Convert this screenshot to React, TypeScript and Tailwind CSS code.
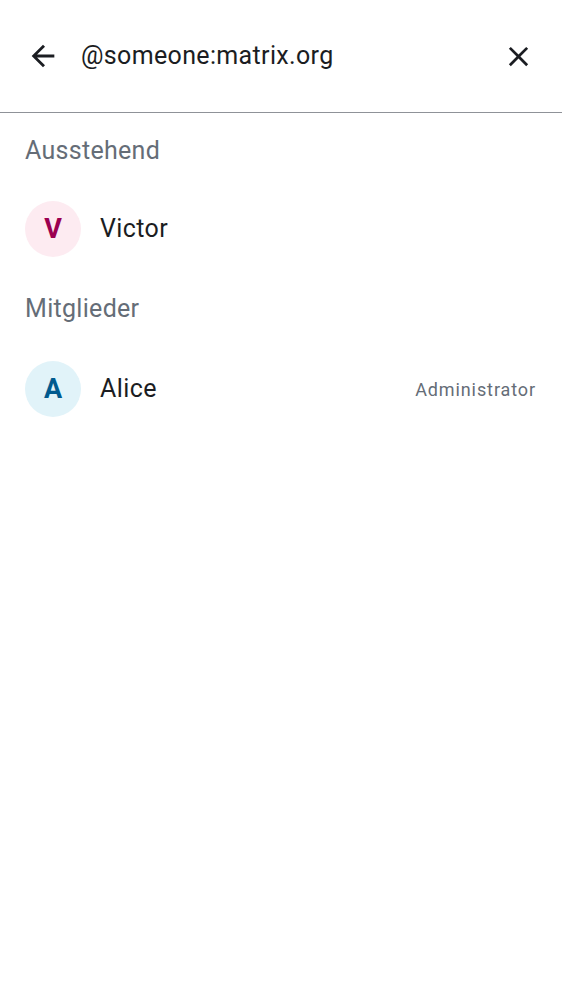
import React from "react";

function ArrowBack() {
  return (
    <svg width="34" height="34" viewBox="0 0 24 24" fill="#1b1d22">
      <path d="M20 11H7.83l5.59-5.59L12 4l-8 8 8 8 1.41-1.41L7.83 13H20v-2z" />
    </svg>
  );
}

function CloseIcon() {
  return (
    <svg width="33" height="33" viewBox="0 0 24 24" fill="#1b1d22">
      <path d="M19 6.41 17.59 5 12 10.59 6.41 5 5 6.41 10.59 12 5 17.59 6.41 19 12 13.41 17.59 19 19 17.59 13.41 12z" />
    </svg>
  );
}

function Member({ letter, name, bg, fg, role }: { letter: string; name: string; bg: string; fg: string; role?: string }) {
  return (
    <div className="flex items-center h-[80px] pl-[25px] pr-[26px]">
      <div className={`w-[56px] h-[56px] rounded-full flex items-center justify-center ${bg}`}>
        <span className={`text-[27px] font-bold ${fg}`}>{letter}</span>
      </div>
      <span className="ml-[19px] text-[25px] text-[#1b1d22] tracking-[0.4px]">{name}</span>
      <div className="flex-1" />
      {role && <span className="text-[18px] text-[#656d77] tracking-[0.9px]">{role}</span>}
    </div>
  );
}

export default function App() {
  return (
    <div className="w-[562px] h-[1000px] bg-white" style={{ fontFamily: "Roboto, sans-serif" }}>
      <div className="h-[113px] flex items-center pl-[26px] pr-[27px] border-b-[1.5px] border-[#8f9298]">
        <ArrowBack />
        <span className="ml-[21px] text-[25px] text-[#1b1d22] flex-1 tracking-[0.35px]">@someone:matrix.org</span>
        <CloseIcon />
      </div>
      <div>
        <div className="h-[76px] flex items-center pl-[25px] text-[25px] text-[#656d77] tracking-[0.3px]">Ausstehend</div>
        <Member letter="V" name="Victor" bg="bg-[#fdebf1]" fg="text-[#9b0050]" />
        <div className="h-[80px] flex items-center pl-[25px] text-[25px] text-[#656d77] tracking-[0.3px]">Mitglieder</div>
        <Member letter="A" name="Alice" bg="bg-[#e1f3f9]" fg="text-[#005a8f]" role="Administrator" />
      </div>
    </div>
  );
}
